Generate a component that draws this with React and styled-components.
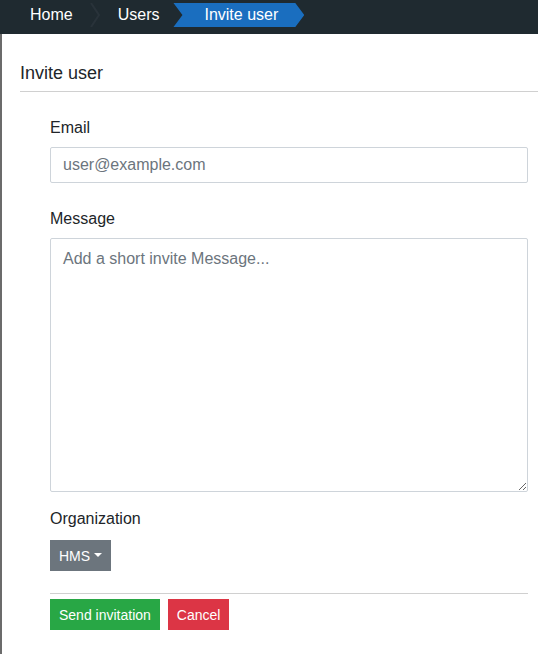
import React from 'react'
import styled, { createGlobalStyle } from 'styled-components'

const GlobalStyle = createGlobalStyle`
  html, body {
    margin: 0;
    padding: 0;
    background: #fff;
    font-family: "Liberation Sans", Arial, sans-serif;
    color: #212529;
  }
  * {
    box-sizing: border-box;
  }
`

const Page = styled.div`
  display: flex;
  flex-direction: column;
  min-height: 654px;
`

const TopBar = styled.nav`
  display: flex;
  align-items: flex-start;
  height: 34px;
  padding: 3px 0 0 30px;
  background: #1f2a30;
`

const Crumb = styled.a`
  display: block;
  height: 24px;
  line-height: 24px;
  font-size: 16px;
  color: #fff;
  text-decoration: none;
  margin-right: ${(p) => p.$gap || 0}px;
`

const ActiveCrumb = styled.span`
  display: block;
  height: 24px;
  line-height: 24px;
  font-size: 16px;
  color: #fff;
  background: #1a6ebf;
  padding: 0 26px 0 31px;
  clip-path: polygon(0 0, calc(100% - 9px) 0, 100% 50%, calc(100% - 9px) 100%, 0 100%, 9px 50%);
`

const Separator = styled.svg`
  display: block;
  width: 10px;
  height: 24px;
  margin-right: 18px;
`

const Body = styled.main`
  flex: 1;
  border-left: 2px solid #6b6b6b;
  padding: 25px 0 24px 18px;
`

const Title = styled.h2`
  margin: 0;
  font-size: 18px;
  font-weight: 400;
  line-height: 28px;
  padding-bottom: 4px;
  border-bottom: 1px solid #d0d0d0;
`

const Form = styled.form`
  display: flex;
  flex-direction: column;
  padding: 24px 10px 0 30px;
`

const Field = styled.div`
  display: flex;
  flex-direction: column;
  margin-bottom: ${(p) => p.$mb || 0}px;
`

const Label = styled.label`
  font-size: 16px;
  line-height: 24px;
  margin-bottom: ${(p) => p.$mb || 7}px;
`

const Input = styled.input`
  height: 36px;
  padding: 0 12px;
  font-family: inherit;
  font-size: 16px;
  color: #495057;
  border: 1px solid #ced4da;
  border-radius: 2px;
  outline: none;

  &::placeholder {
    color: #6c757d;
  }
`

const TextArea = styled.textarea`
  height: 254px;
  padding: 8px 12px;
  font-family: inherit;
  font-size: 16px;
  line-height: 24px;
  color: #495057;
  border: 1px solid #ced4da;
  border-radius: 2px;
  outline: none;
  resize: both;

  &::placeholder {
    color: #6c757d;
  }
`

const Button = styled.button`
  display: inline-flex;
  align-items: center;
  gap: 4px;
  height: 31px;
  padding: 0 9px;
  font-family: inherit;
  font-size: 14px;
  color: #fff;
  border: none;
  border-radius: 0;
  background: ${(p) => p.$bg};
  cursor: pointer;
`

const Caret = styled.span`
  width: 0;
  height: 0;
  border-left: 4px solid transparent;
  border-right: 4px solid transparent;
  border-top: 4px solid #fff;
  margin-top: -2px;
`

const Divider = styled.hr`
  margin: 22px 0 5px;
  border: none;
  border-top: 1px solid #d0d0d0;
`

const Actions = styled.div`
  display: flex;
  gap: 8px;
`

const App = () => {
  return (
    <Page>
      <GlobalStyle />
      <TopBar>
        <Crumb href="#" $gap={17}>Home</Crumb>
        <Separator viewBox="0 0 10 24">
          <path d="M1 0 L9 12 L1 24" fill="none" stroke="#29333a" strokeWidth="2" />
        </Separator>
        <Crumb href="#" $gap={14}>Users</Crumb>
        <ActiveCrumb>Invite user</ActiveCrumb>
      </TopBar>
      <Body>
        <Title>Invite user</Title>
        <Form onSubmit={(e) => e.preventDefault()}>
          <Field $mb={24}>
            <Label>Email</Label>
            <Input type="email" placeholder="user@example.com" />
          </Field>
          <Field $mb={15}>
            <Label>Message</Label>
            <TextArea placeholder="Add a short invite Message..." />
          </Field>
          <Field>
            <Label $mb={9}>Organization</Label>
            <div>
              <Button type="button" $bg="#6c757d">
                HMS <Caret />
              </Button>
            </div>
          </Field>
          <Divider />
          <Actions>
            <Button type="submit" $bg="#28a745">Send invitation</Button>
            <Button type="button" $bg="#dc3545">Cancel</Button>
          </Actions>
        </Form>
      </Body>
    </Page>
  )
}

export default App
